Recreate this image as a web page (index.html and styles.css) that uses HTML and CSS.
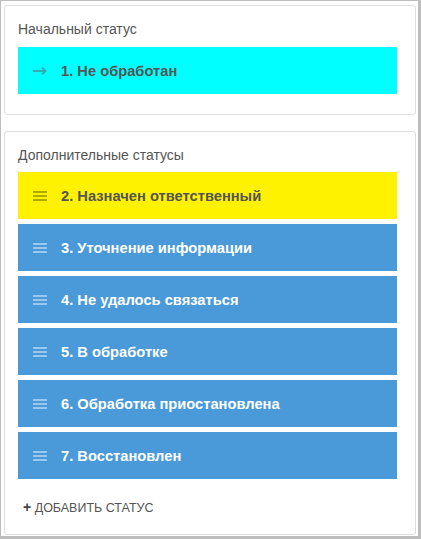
FILE: index.html
```html
<!DOCTYPE html>
<html lang="ru">
<head>
<meta charset="utf-8">
<link rel="stylesheet" href="styles.css">
</head>
<body>
<div class="frame">
  <section class="card card-initial">
    <div class="card-label">Начальный статус</div>
    <div class="status status-cyan">
      <span class="status-icon">
        <svg width="14" height="8" viewBox="0 0 14 8"><path d="M0 4H12.5M9 0.7L12.5 4L9 7.3" fill="none" stroke="currentColor" stroke-width="2"/></svg>
      </span>
      <span class="status-text">1. Не обработан</span>
    </div>
  </section>
  <section class="card card-extra">
    <div class="card-label card-label-tight">Дополнительные статусы</div>
    <div class="status-list">
      <div class="status status-yellow"><span class="status-icon"><i class="burger"></i></span><span class="status-text">2. Назначен ответственный</span></div>
      <div class="status status-blue"><span class="status-icon"><i class="burger"></i></span><span class="status-text">3. Уточнение информации</span></div>
      <div class="status status-blue"><span class="status-icon"><i class="burger"></i></span><span class="status-text">4. Не удалось связаться</span></div>
      <div class="status status-blue"><span class="status-icon"><i class="burger"></i></span><span class="status-text">5. В обработке</span></div>
      <div class="status status-blue"><span class="status-icon"><i class="burger"></i></span><span class="status-text">6. Обработка приостановлена</span></div>
      <div class="status status-blue"><span class="status-icon"><i class="burger"></i></span><span class="status-text">7. Восстановлен</span></div>
    </div>
    <div class="add-status"><b class="plus">+</b> Добавить статус</div>
  </section>
</div>
</body>
</html>
```
FILE: styles.css
```css
html, body {
  margin: 0;
  padding: 0;
  background: #fff;
}
body {
  font-family: "Liberation Sans", Arial, sans-serif;
  width: 421px;
  height: 539px;
  overflow: hidden;
}
.frame {
  box-sizing: border-box;
  width: 421px;
  height: 539px;
  border-left: 1px solid #bdbdbd;
  border-top: 1px solid #bdbdbd;
  border-right: 3px solid #bdbdbd;
  border-bottom: 3px solid #bdbdbd;
  padding: 4px 2px 0 3px;
  display: flex;
  flex-direction: column;
  gap: 16px;
}
.card {
  border: 1px solid #dedede;
  border-radius: 3px;
  padding: 14px 18px 0 13px;
}
.card-initial {
  height: 110px;
  box-sizing: border-box;
  padding-bottom: 20px;
}
.card-extra {
  flex: 1;
  margin-bottom: 1px;
}
.card-label {
  font-size: 14px;
  line-height: 18px;
  color: #555;
  margin-bottom: 9px;
}
.card-label-tight {
  margin-bottom: 8px;
}
.status-list {
  display: flex;
  flex-direction: column;
  gap: 5px;
}
.status {
  height: 47px;
  display: flex;
  align-items: center;
  padding-left: 15px;
  font-size: 14.7px;
  font-weight: bold;
}
.status-icon {
  width: 14px;
  height: 10px;
  margin-right: 14px;
  display: flex;
  align-items: center;
}
.burger {
  display: block;
  width: 14px;
  height: 2px;
  background: currentColor;
  box-shadow: 0 -4px 0 currentColor, 0 4px 0 currentColor;
}
.status-cyan {
  background: #00ffff;
  color: #555;
}
.status-cyan .status-icon { color: #2fb0b0; }
.status-yellow {
  background: #fff200;
  color: #555;
}
.status-yellow .status-icon { color: rgba(0, 0, 0, 0.3); }
.status-blue {
  background: #4a9ad9;
  color: #fff;
}
.status-blue .status-icon { color: rgba(255, 255, 255, 0.45); }
.add-status {
  margin-top: 19px;
  padding-left: 5px;
  font-size: 12.5px;
  line-height: 18px;
  text-transform: uppercase;
  color: #555;
}
.plus {
  font-size: 14px;
  color: #444;
}
```
